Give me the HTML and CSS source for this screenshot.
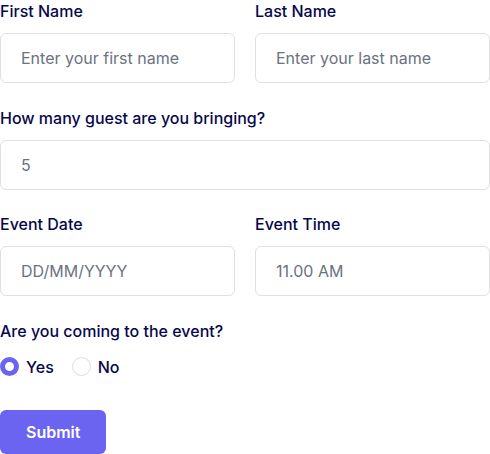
FILE: index.html
```html
<!DOCTYPE html>
<html lang="en">
<head>
<meta charset="utf-8">
<title>Event Form</title>
<link rel="stylesheet" href="styles.css">
</head>
<body>
<form class="form">
  <div class="row">
    <div class="field">
      <label class="label" for="fname">First Name</label>
      <input class="input" id="fname" type="text" placeholder="Enter your first name">
    </div>
    <div class="field">
      <label class="label" for="lname">Last Name</label>
      <input class="input" id="lname" type="text" placeholder="Enter your last name">
    </div>
  </div>
  <div class="field">
    <label class="label" for="guest">How many guest are you bringing?</label>
    <input class="input" id="guest" type="text" placeholder="5">
  </div>
  <div class="row">
    <div class="field">
      <label class="label" for="date">Event Date</label>
      <input class="input" id="date" type="text" placeholder="DD/MM/YYYY">
    </div>
    <div class="field">
      <label class="label" for="time">Event Time</label>
      <input class="input" id="time" type="text" placeholder="11.00 AM">
    </div>
  </div>
  <div class="field field-radio">
    <span class="label">Are you coming to the event?</span>
    <div class="radios">
      <label class="radio-item"><input class="radio" type="radio" name="coming" checked><span class="radio-text">Yes</span></label>
      <label class="radio-item"><input class="radio" type="radio" name="coming"><span class="radio-text">No</span></label>
    </div>
  </div>
  <div class="actions">
    <button class="btn" type="button">Submit</button>
  </div>
</form>
</body>
</html>
```
FILE: styles.css
```css
* { box-sizing: border-box; }
html, body { margin: 0; padding: 0; background: #ffffff; }
body {
  font-family: Inter, "Noto Sans", sans-serif;
  font-size: 16px;
  line-height: 24px;
  width: 490px;
}
.form { display: flex; flex-direction: column; margin-top: -1px; }
.row { display: grid; grid-template-columns: 1fr 1fr; column-gap: 20px; }
.field { display: flex; flex-direction: column; margin-bottom: 22.5px; }
.label {
  display: block;
  margin-bottom: 10px;
  color: #07074D;
  font-weight: 500;
  font-size: 16px;
  line-height: 24px;
}
.input {
  width: 100%;
  height: 50px;
  border: 1px solid #e0e0e0;
  border-radius: 6px;
  background: #ffffff;
  padding: 0 20px;
  font-family: inherit;
  font-size: 16px;
  font-weight: 400;
  color: #6B7280;
  outline: none;
}
.input::placeholder { color: #6B7280; opacity: 1; }
.field-radio { margin-bottom: 31.5px; }
.radios { display: flex; align-items: center; gap: 18px; margin-top: 2px; }
.radio-item { display: flex; align-items: center; gap: 7px; cursor: pointer; }
.radio {
  appearance: none;
  -webkit-appearance: none;
  margin: 0;
  width: 19px;
  height: 19px;
  border-radius: 50%;
  border: 1px solid #dddddd;
  background: #ffffff;
}
.radio:checked { border: 5.5px solid #6A64F1; }
.radio-text { color: #07074D; font-weight: 500; font-size: 16px; line-height: 24px; }
.actions { display: flex; }
.btn {
  border: none;
  border-radius: 6px;
  background: #6A64F1;
  color: #ffffff;
  font-family: inherit;
  font-size: 16px;
  font-weight: 600;
  line-height: 24px;
  padding: 10px 26px;
  cursor: pointer;
}
```
